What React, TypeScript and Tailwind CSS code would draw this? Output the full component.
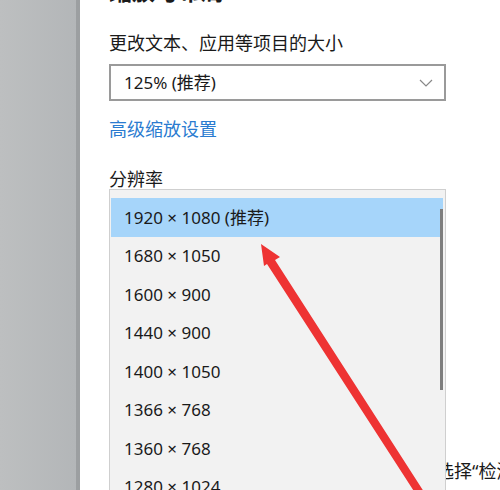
import React from 'react';

const RESOLUTIONS = [
  '1920 × 1080 (推荐)',
  '1680 × 1050',
  '1600 × 900',
  '1440 × 900',
  '1400 × 1050',
  '1366 × 768',
  '1360 × 768',
  '1280 × 1024',
];

const FONT = { fontFamily: '"Noto Sans", "Noto Sans CJK SC", sans-serif' };

export default function App() {
  return (
    <div className="relative w-[500px] h-[490px] overflow-hidden bg-white flex" style={FONT}>
      {/* left sidebar strip */}
      <div className="w-[76px] shrink-0 bg-gradient-to-r from-[#bdbfc0] to-[#b3b6b8]" />
      <div className="w-[4px] shrink-0 bg-[#9c9fa1]" />

      {/* content */}
      <div className="flex-1 pl-[29px] pr-[54px] flex flex-col text-[#1a1a1a] [&>*]:shrink-0">
        <div className="-mt-[23px] h-[28px] text-[23px] font-bold leading-[28px]">缩放与布局</div>

        <div className="mt-[26px] text-[18px] leading-[24px]">更改文本、应用等项目的大小</div>

        <div className="mt-[9px] h-[37px] border-2 border-[#9a9a9a] flex items-center justify-between pl-[13px] pr-[11px] text-[17px]">
          <span>125% (推荐)</span>
          <svg width="14" height="8" viewBox="0 0 14 8" fill="none">
            <path d="M1 1l6 6 6-6" stroke="#888" strokeWidth="1.2" />
          </svg>
        </div>

        <div className="mt-[16px] text-[18px] leading-[24px] text-[#2a7bd0]">高级缩放设置</div>

        <div className="mt-[27px] text-[18px] leading-[22px]">分辨率</div>

        {/* open resolution list */}
        <div className="relative z-10 -mt-[1px] h-[320px] border border-[#cfcfcf] bg-[#f2f2f2] pt-[8px] pl-[1px] pr-[2px]">
          {RESOLUTIONS.map((r, i) => (
            <div
              key={r}
              className={`h-[38.5px] flex items-center pl-[13px] text-[17px] ${i === 0 ? 'bg-[#a6d5fa]' : ''}`}
            >
              {r}
            </div>
          ))}
          <div className="absolute right-[2px] top-[19px] w-[3px] h-[181px] bg-[#7d7d7d]" />
        </div>
      </div>

      {/* text under the popup */}
      <div className="absolute left-[436px] top-[458px] text-[18px] whitespace-nowrap text-[#1a1a1a]">选择“检测”</div>

      {/* red annotation arrow */}
      <svg className="absolute inset-0 z-20 pointer-events-none" width="500" height="490" viewBox="0 0 500 490">
        <polygon
          points="261,244 280,257 275,260 426,495 419,499 267,264 264,266"
          fill="#ee3333"
        />
      </svg>
    </div>
  );
}
